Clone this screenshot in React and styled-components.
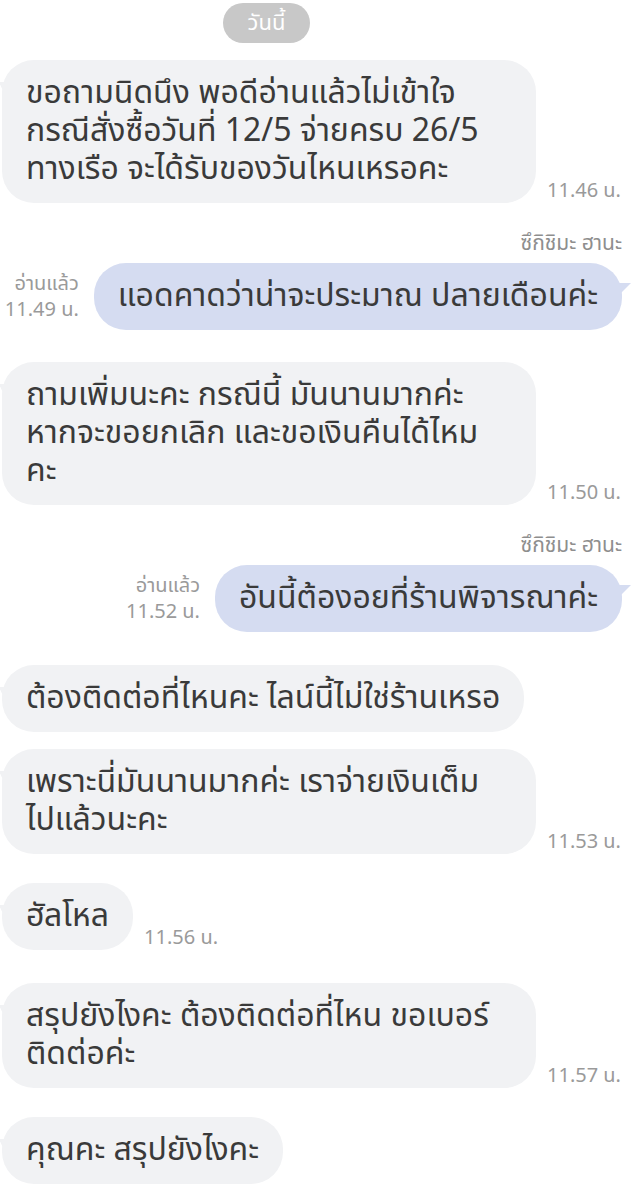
import React from "react";
import styled, { createGlobalStyle } from "styled-components";

const GlobalStyle = createGlobalStyle`
  body {
    margin: 0;
    background: #ffffff;
    font-family: "Noto Sans Thai", "Noto Sans", "DejaVu Sans", sans-serif;
  }
`;

const Chat = styled.div`
  width: 636px;
  display: flex;
  flex-direction: column;
  padding-bottom: 20px;
`;

const DateRow = styled.div`
  padding: 3px 0 0 223px;
  display: flex;
`;

const DatePill = styled.div`
  height: 40px;
  width: 87px;
  border-radius: 20px;
  background: #c8c8c8;
  color: #ffffff;
  font-size: 22px;
  display: flex;
  align-items: center;
  justify-content: center;
`;

const Row = styled.div`
  display: flex;
  align-items: flex-end;
  margin-top: ${(p) => p.top}px;
  padding: ${(p) => (p.mine ? "0 14px 0 0" : "0 0 0 2px")};
  justify-content: ${(p) => (p.mine ? "flex-end" : "flex-start")};
`;

const Bubble = styled.div`
  position: relative;
  ${(p) => (p.wide ? "width: 486px;" : "")}
  padding: 14px 24px 15px 24px;
  border-radius: 32px;
  background: ${(p) => (p.mine ? "#d5dcf1" : "#f1f2f4")};
  color: #3a3a3a;
  font-size: 32px;
  line-height: 38px;

  &::before {
    content: "";
    position: absolute;
    top: ${(p) => (p.mine ? 20 : 22)}px;
    ${(p) => (p.mine ? "right: -9px;" : "left: -3px;")}
    width: 0;
    height: 0;
    border-bottom: 13px solid transparent;
    ${(p) =>
      p.mine
        ? "border-left: 13px solid #d5dcf1;"
        : "border-right: 6px solid #f1f2f4;"}
  }
`;

const Line = styled.div`
  white-space: nowrap;
`;

const Time = styled.div`
  color: #9a9a9a;
  font-size: 20px;
  line-height: 24px;
  margin: 0 0 0 11px;
  white-space: nowrap;
`;

const ReadInfo = styled.div`
  align-self: center;
  text-align: right;
  color: #9a9a9a;
  font-size: 20px;
  line-height: 26px;
  margin: 0 15px 0 0;
  white-space: nowrap;
`;

const Name = styled.div`
  margin-top: ${(p) => p.top}px;
  padding-right: 14px;
  text-align: right;
  color: #8e8e8e;
  font-size: 21px;
  line-height: 24px;
`;

const Received = ({ top, time, lines }) => (
  <Row top={top}>
    <Bubble wide={lines.length > 1}>
      {lines.map((l, i) => (
        <Line key={i}>{l}</Line>
      ))}
    </Bubble>
    {time && <Time>{time}</Time>}
  </Row>
);

const Sent = ({ top, time, children }) => (
  <Row top={top} mine>
    <ReadInfo>
      อ่านแล้ว
      <br />
      {time}
    </ReadInfo>
    <Bubble mine>
      <Line>{children}</Line>
    </Bubble>
  </Row>
);

export default function App() {
  return (
    <Chat>
      <GlobalStyle />
      <DateRow>
        <DatePill>วันนี้</DatePill>
      </DateRow>
      <Received
        top={17}
        time="11.46 น."
        lines={[
          "ขอถามนิดนึง พอดีอ่านแล้วไม่เข้าใจ",
          "กรณีสั่งซื้อวันที่ 12/5 จ่ายครบ 26/5",
          "ทางเรือ จะได้รับของวันไหนเหรอคะ",
        ]}
      />
      <Name top={29}>ซึกิชิมะ ฮานะ</Name>
      <Sent top={7} time="11.49 น.">
        แอดคาดว่าน่าจะประมาณ ปลายเดือนค่ะ
      </Sent>
      <Received
        top={32}
        time="11.50 น."
        lines={[
          "ถามเพิ่มนะคะ กรณีนี้ มันนานมากค่ะ",
          "หากจะขอยกเลิก และขอเงินคืนได้ไหม",
          "คะ",
        ]}
      />
      <Name top={29}>ซึกิชิมะ ฮานะ</Name>
      <Sent top={7} time="11.52 น.">
        อันนี้ต้องอยที่ร้านพิจารณาค่ะ
      </Sent>
      <Received top={33} lines={["ต้องติดต่อที่ไหนคะ ไลน์นี้ไม่ใช่ร้านเหรอ"]} />
      <Received
        top={17}
        time="11.53 น."
        lines={["เพราะนี่มันนานมากค่ะ เราจ่ายเงินเต็ม", "ไปแล้วนะคะ"]}
      />
      <Received top={29} time="11.56 น." lines={["ฮัลโหล"]} />
      <Received
        top={33}
        time="11.57 น."
        lines={["สรุปยังไงคะ ต้องติดต่อที่ไหน ขอเบอร์", "ติดต่อค่ะ"]}
      />
      <Received top={29} lines={["คุณคะ สรุปยังไงคะ"]} />
    </Chat>
  );
}
